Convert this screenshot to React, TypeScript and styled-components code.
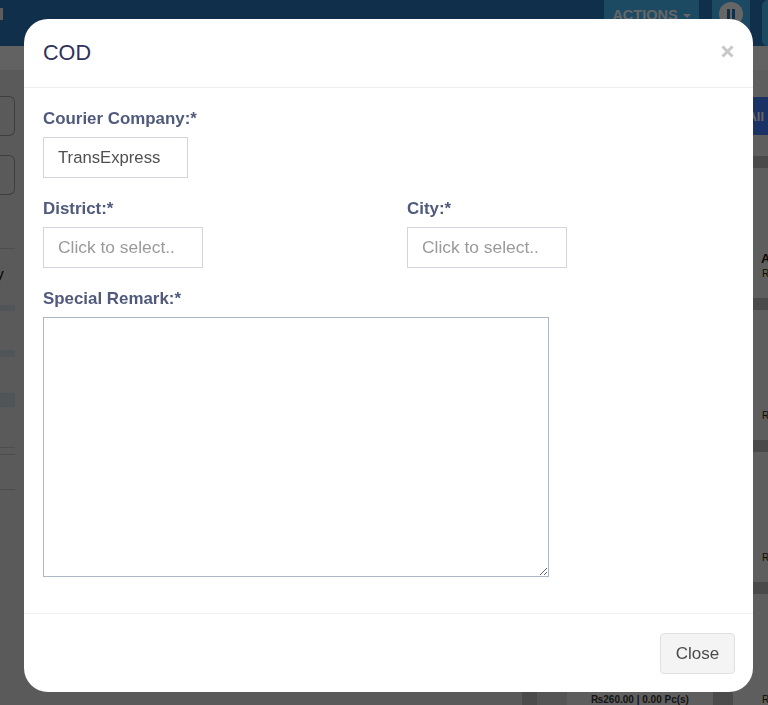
import React from "react";
import styled, { createGlobalStyle } from "styled-components";

const Global = createGlobalStyle`
  html, body { margin: 0; padding: 0; height: 705px; overflow: hidden; background: #e1e1e1; }
  * { box-sizing: border-box; }
  body { font-family: "Liberation Sans", Arial, sans-serif; }
`;

const Page = styled.div`
  position: relative;
  width: 768px;
  height: 705px;
  overflow: hidden;
  background: #e1e1e1;
`;

const Backdrop = styled.div`
  height: 705px;
  display: flex;
  flex-direction: column;
  filter: blur(0.6px);
`;

const TopBar = styled.header`
  height: 46px;
  flex: none;
  background: #2a76b8;
  display: flex;
  align-items: stretch;
`;

const LogoStub = styled.div`
  width: 3px;
  height: 12px;
  margin: 8px auto 0 0;
  background: #e8e8e8;
`;

const ActionsButton = styled.div`
  width: 95px;
  margin-right: 13px;
  padding-top: 7px;
  background: #48b9f7;
  color: #fff;
  font-size: 14.5px;
  font-weight: 700;
  line-height: 16px;
  display: flex;
  align-items: flex-start;
  justify-content: center;
  gap: 5px;
`;

const Caret = styled.span`
  width: 0;
  height: 0;
  margin-top: 7px;
  border-left: 4px solid transparent;
  border-right: 4px solid transparent;
  border-top: 4px solid #fff;
`;

const PauseBlock = styled.div`
  width: 38px;
  margin-right: 12px;
  padding-top: 2px;
  background: #48b9f7;
  display: flex;
  justify-content: center;
  align-items: flex-start;
`;

const PauseDisc = styled.div`
  width: 24px;
  height: 24px;
  border-radius: 50%;
  background: #fff;
  display: flex;
  align-items: center;
  justify-content: center;
  gap: 2px;
`;

const PauseBar = styled.span`
  width: 3px;
  height: 10px;
  background: #2a76b8;
`;

const EdgeBlock = styled.div`
  width: 6px;
  background: #48b9f7;
  border-radius: 6px 0 0 6px;
`;

const SubBar = styled.div`
  height: 24px;
  flex: none;
  background: #f5f5f5;
`;

const Content = styled.main`
  flex: 1;
  min-height: 0;
  display: flex;
  justify-content: space-between;
`;

const LeftColumn = styled.div`
  width: 15px;
  padding-top: 26px;
  display: flex;
  flex-direction: column;
`;

const StubField = styled.div`
  height: 40px;
  flex: none;
  margin-bottom: 19px;
  border: 1px solid #9c9c9c;
  border-left: none;
  border-radius: 0 6px 6px 0;
`;

const StubLabel = styled.div`
  width: 4px;
  height: 14px;
  margin-top: 18px;
  overflow: hidden;
  display: flex;
  justify-content: flex-end;
  font-size: 13px;
  font-weight: 700;
  line-height: 14px;
  color: #333;
`;

const TableRule = styled.div<{ $top: number; $height: number; $tint?: boolean }>`
  height: ${(p) => p.$height}px;
  flex: none;
  margin-top: ${(p) => p.$top}px;
  background: ${(p) => (p.$tint ? "#c8d8da" : "#c0c0c0")};
`;

const ProductPanel = styled.div`
  width: 246px;
  background: #ececec;
`;

const FilterRow = styled.div`
  height: 86px;
  padding-top: 27px;
  display: flex;
  justify-content: flex-end;
`;

const AllButton = styled.div`
  width: 60px;
  height: 38px;
  padding-right: 4px;
  background: #417dfa;
  color: #fff;
  font-size: 13px;
  font-weight: 700;
  display: flex;
  align-items: center;
  justify-content: flex-end;
`;

const RowBand = styled.div`
  height: 12px;
  background: #b8b8b8;
`;

const RowBody = styled.div`
  height: 130px;
  display: flex;
  background: #ececec;
`;

const Gutter = styled.div<{ $width: number }>`
  width: ${(p) => p.$width}px;
  flex: none;
  background: #bcbcbc;
`;

const Thumb = styled.div`
  width: 30px;
  flex: none;
  background: #d4d4d4;
`;

const CardInfo = styled.div`
  width: 146px;
  flex: none;
  padding-bottom: 17px;
  display: flex;
  flex-direction: column;
  justify-content: flex-end;
  align-items: center;
  white-space: nowrap;
`;

const ClippedCard = styled.div`
  width: 35px;
  flex: none;
  padding: 0 0 17px 29px;
  display: flex;
  flex-direction: column;
  justify-content: flex-end;
  overflow: hidden;
  white-space: nowrap;
`;

const ProductName = styled.div`
  font-size: 13px;
  font-weight: 700;
  line-height: 14px;
  margin-left: -1px;
  color: #1c1c1c;
`;

const Price = styled.div`
  font-size: 10px;
  font-weight: 700;
  line-height: 15px;
  color: #333;
`;

const SmallPrice = styled(Price)`
  font-weight: 400;
  color: #222;
`;

const Overlay = styled.div`
  position: absolute;
  inset: 0;
  background: rgba(0, 0, 0, 0.6);
`;

const Modal = styled.section`
  position: absolute;
  left: 24px;
  top: 19px;
  width: 729px;
  height: 673px;
  background: #fff;
  border-radius: 24px;
  display: flex;
  flex-direction: column;
`;

const ModalHeader = styled.div`
  height: 69px;
  flex: none;
  padding: 0 19px;
  border-bottom: 1px solid #eeeeee;
  display: flex;
  align-items: center;
  justify-content: space-between;
`;

const Title = styled.h4`
  margin: 0;
  font-size: 21.6px;
  font-weight: 400;
  color: #2f3160;
`;

const CloseGlyph = styled.span`
  display: flex;
  color: #c8c8c8;
  margin-top: -3px;
`;

const ModalBody = styled.div`
  flex: 1;
  padding: 22px 19px 0;
  display: flex;
  flex-direction: column;
`;

const Label = styled.label`
  display: block;
  height: 18px;
  line-height: 18px;
  font-size: 16.9px;
  font-weight: 700;
  color: #505a7c;
`;

const SelectBox = styled.div<{ $width: number; $placeholder?: boolean }>`
  width: ${(p) => p.$width}px;
  height: 41px;
  margin-top: 9px;
  padding-left: 14px;
  border: 1px solid #d4d4de;
  display: flex;
  align-items: center;
  font-size: ${(p) => (p.$placeholder ? "17.4px" : "16.7px")};
  color: ${(p) => (p.$placeholder ? "#9a9a9a" : "#505050")};
`;

const FieldRow = styled.div`
  display: grid;
  grid-template-columns: 364px 1fr;
  margin-top: 22px;
`;

const RemarkField = styled.div`
  margin-top: 22px;
`;

const RemarkBox = styled.textarea`
  display: block;
  width: 506px;
  height: 260px;
  margin: 9px 0 0;
  border: 1px solid #a9b8c4;
  border-radius: 0;
  outline: none;
  background: #fff;
`;

const ModalFooter = styled.div`
  height: 79px;
  flex: none;
  border-top: 1px solid #f2f2f2;
  padding: 19px 18px 0 0;
  display: flex;
  justify-content: flex-end;
  align-items: flex-start;
`;

const CloseButton = styled.button`
  width: 75px;
  height: 41px;
  padding: 0;
  background: #f4f4f4;
  border: 1px solid #e0e0e0;
  border-radius: 4px;
  font-family: inherit;
  font-size: 17px;
  color: #4a4a4a;
`;

const rules = [
  { top: 24, height: 6, tint: true },
  { top: 39, height: 7, tint: true },
  { top: 36, height: 14, tint: true },
  { top: 40, height: 1 },
  { top: 6, height: 1 },
  { top: 34, height: 1 },
];

function ProductRow({ name }: { name?: string }) {
  return (
    <>
      <RowBand />
      <RowBody>
        <Gutter $width={15} />
        <Thumb />
        <CardInfo>
          <Price>₨260.00 | 0.00 Pc(s)</Price>
        </CardInfo>
        <Gutter $width={20} />
        <ClippedCard>
          {name && <ProductName>{name}</ProductName>}
          <SmallPrice>₨260.00</SmallPrice>
        </ClippedCard>
      </RowBody>
    </>
  );
}

export default function App() {
  return (
    <Page>
      <Global />
      <Backdrop>
        <TopBar>
          <LogoStub />
          <ActionsButton>
            ACTIONS
            <Caret />
          </ActionsButton>
          <PauseBlock>
            <PauseDisc>
              <PauseBar />
              <PauseBar />
            </PauseDisc>
          </PauseBlock>
          <EdgeBlock />
        </TopBar>
        <SubBar />
        <Content>
          <LeftColumn>
            <StubField />
            <StubField />
            <TableRule $top={34} $height={1} />
            <StubLabel>y</StubLabel>
            {rules.map((r, i) => (
              <TableRule key={i} $top={r.top} $height={r.height} $tint={r.tint} />
            ))}
          </LeftColumn>
          <ProductPanel>
            <FilterRow>
              <AllButton>All</AllButton>
            </FilterRow>
            <ProductRow name="A" />
            <ProductRow />
            <ProductRow />
            <ProductRow />
          </ProductPanel>
        </Content>
      </Backdrop>
      <Overlay />
      <Modal>
        <ModalHeader>
          <Title>COD</Title>
          <CloseGlyph>
            <svg width="13" height="13" viewBox="0 0 13 13" aria-hidden="true">
              <path d="M1.5 1.5 11.5 11.5M11.5 1.5 1.5 11.5" stroke="currentColor" strokeWidth="3" fill="none" />
            </svg>
          </CloseGlyph>
        </ModalHeader>
        <ModalBody>
          <div>
            <Label>Courier Company:*</Label>
            <SelectBox $width={145}>TransExpress</SelectBox>
          </div>
          <FieldRow>
            <div>
              <Label>District:*</Label>
              <SelectBox $width={160} $placeholder>Click to select..</SelectBox>
            </div>
            <div>
              <Label>City:*</Label>
              <SelectBox $width={160} $placeholder>Click to select..</SelectBox>
            </div>
          </FieldRow>
          <RemarkField>
            <Label>Special Remark:*</Label>
            <RemarkBox />
          </RemarkField>
        </ModalBody>
        <ModalFooter>
          <CloseButton>Close</CloseButton>
        </ModalFooter>
      </Modal>
    </Page>
  );
}
